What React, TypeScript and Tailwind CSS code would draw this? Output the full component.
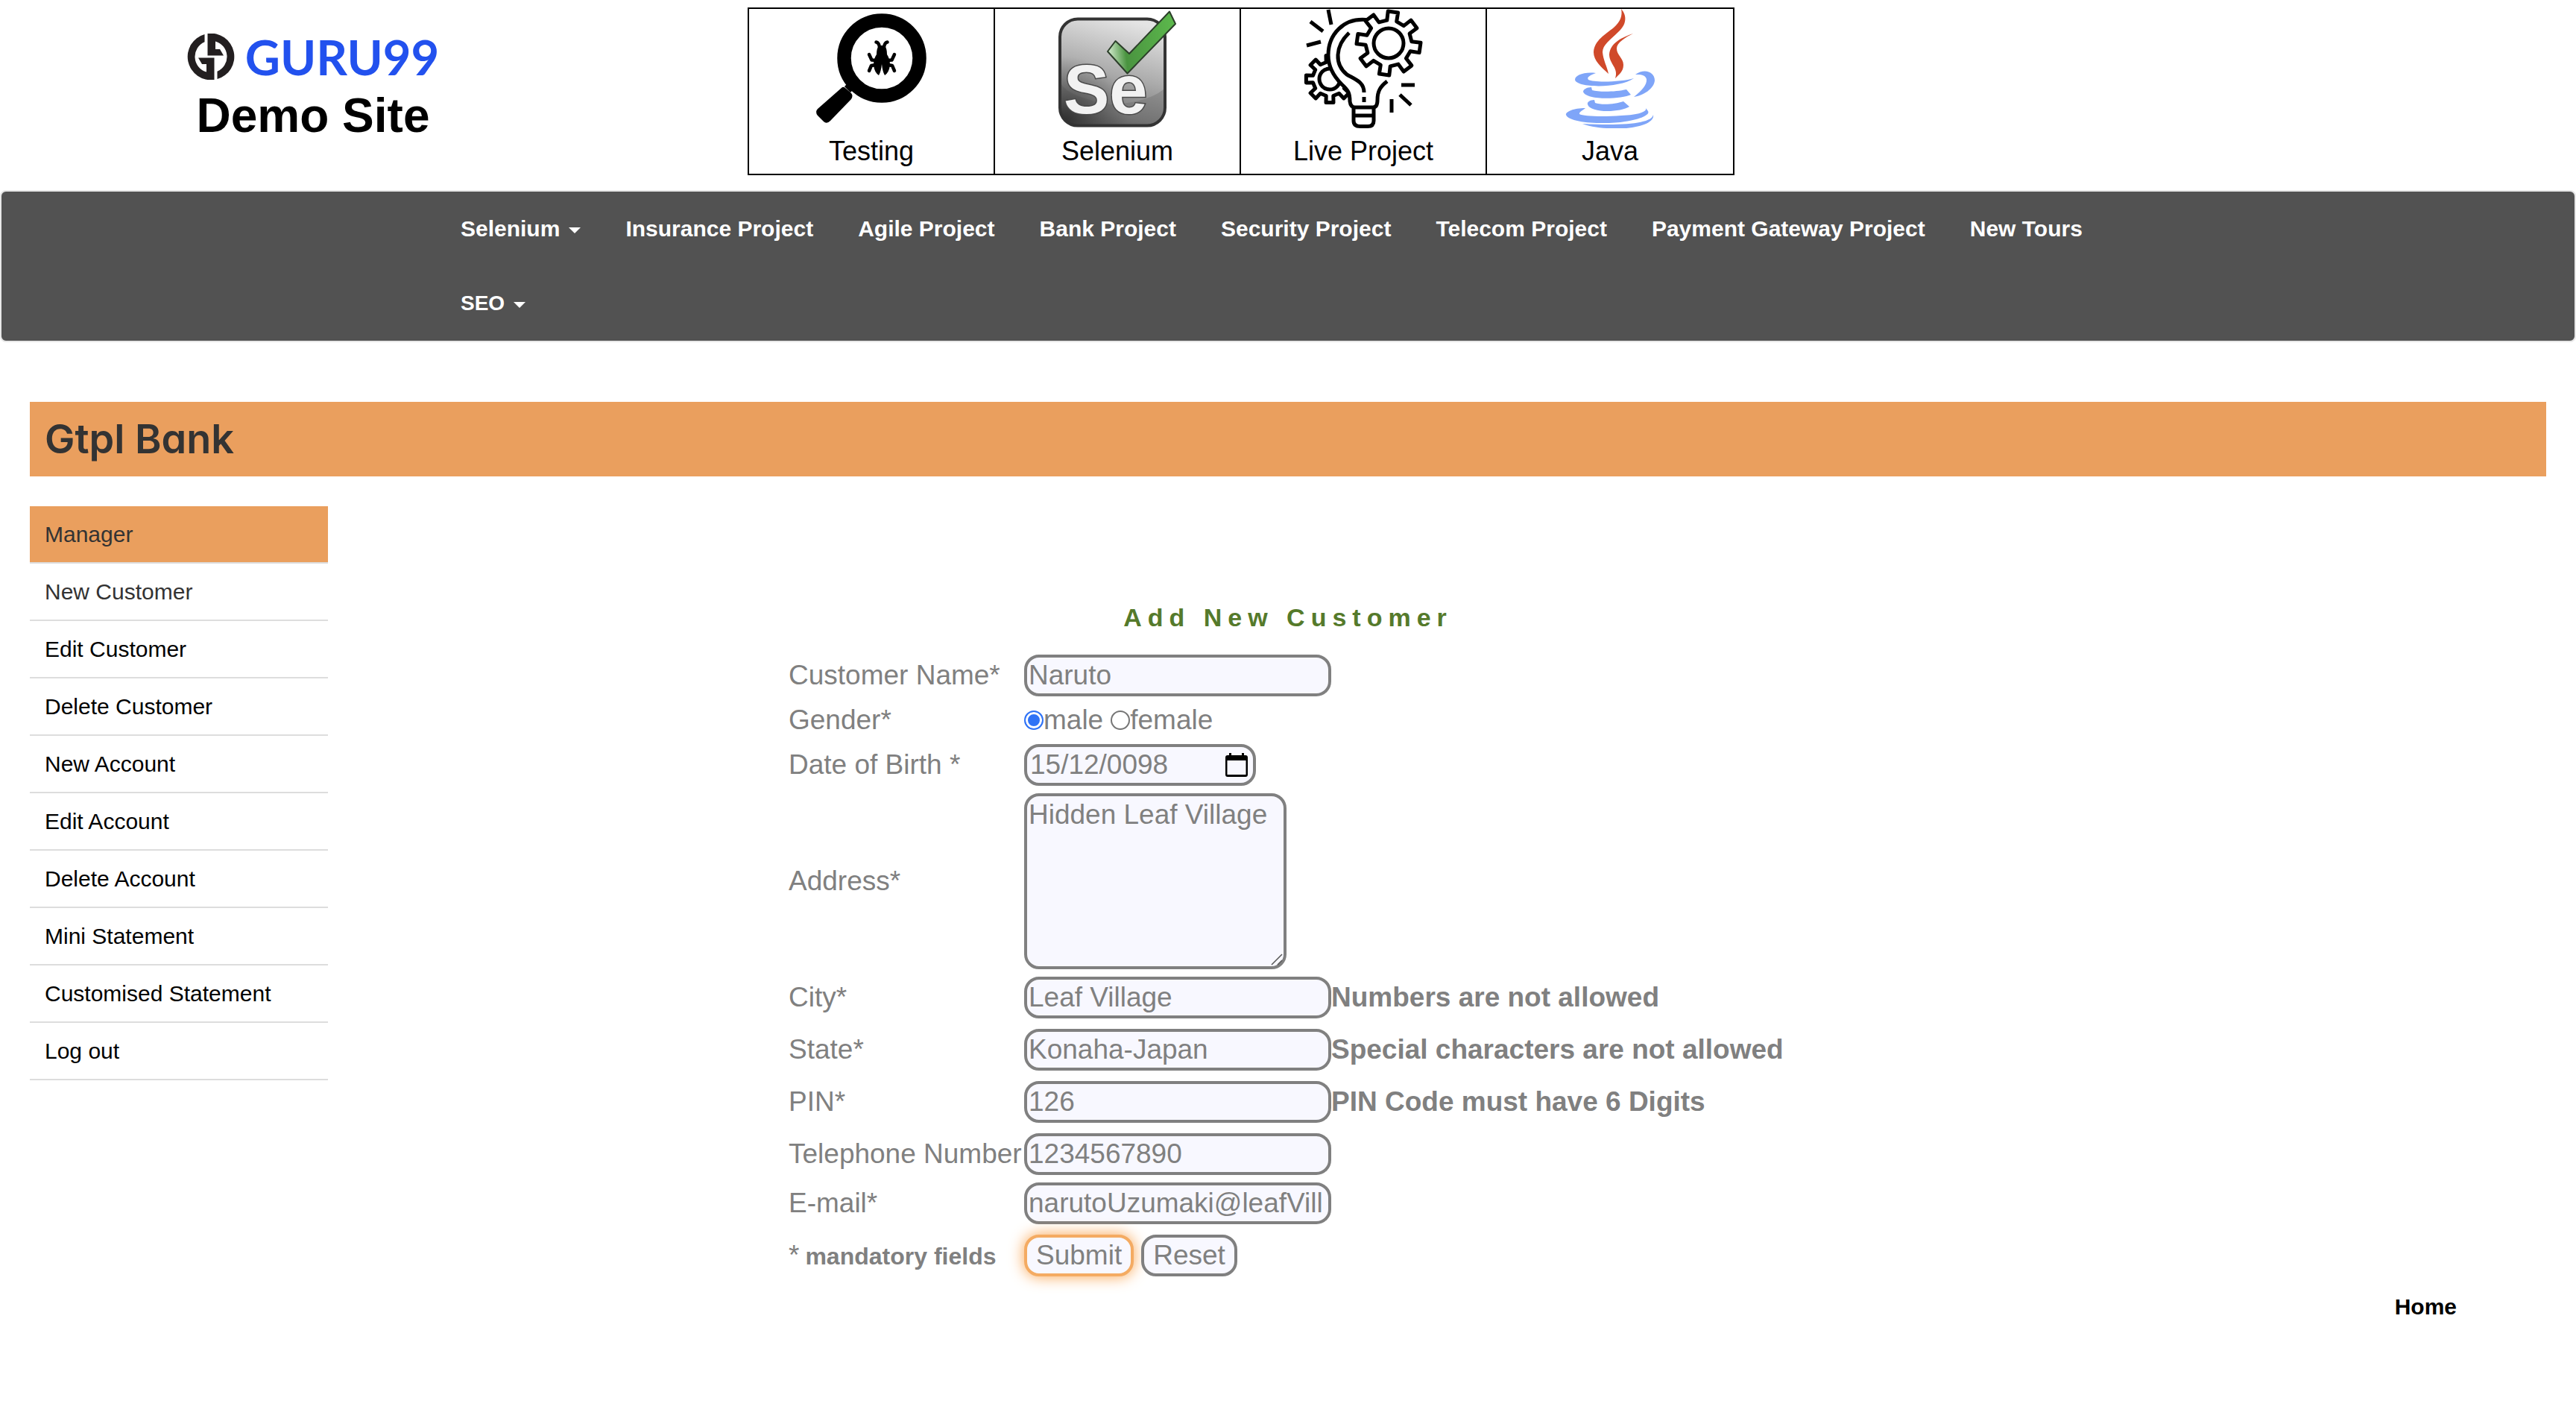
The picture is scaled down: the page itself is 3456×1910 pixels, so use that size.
import { useState } from "react";
import type { ReactNode } from "react";

/* ---------- Drawings ---------- */

function gearPath(cx: number, cy: number, outer: number, root: number, teeth: number, turn: number) {
  const step = 360 / teeth;
  const at = (r: number, deg: number) => {
    const a = ((deg - 90) * Math.PI) / 180;
    return `${(cx + r * Math.cos(a)).toFixed(1)} ${(cy + r * Math.sin(a)).toFixed(1)}`;
  };
  const points: string[] = [];
  for (let i = 0; i < teeth; i++) {
    const mid = turn + i * step;
    points.push(at(root, mid - step * 0.27), at(outer, mid - step * 0.2));
    points.push(at(outer, mid + step * 0.2), at(root, mid + step * 0.27));
  }
  return `M${points.join("L")}Z`;
}

function GuruMark() {
  const half =
    "M23.500 0.900 A31.300 31.300 0 0 0 36.500 62 L36.500 32.500 L15 32.500 L20 41 L26 41 L26 51.600 A21.500 21.500 0 0 1 23.500 11.200 Z";
  return (
    <svg viewBox="0 0 64 62" className="h-[62px] w-16" fill="#231f20" aria-hidden="true">
      <path d={half} />
      <path d={half} transform="rotate(180 32 31)" />
    </svg>
  );
}

function TestingIcon() {
  return (
    <svg viewBox="0 0 160 160" className="size-40" aria-hidden="true">
      <circle cx="94" cy="66" r="50.5" fill="none" stroke="#000" strokeWidth="18.5" />
      <path d="M46 102 L54 110" stroke="#000" strokeWidth="6" />
      <path d="M41 105 Q43 104 45 106 L53 113 Q56 116 53 121 L25 150 Q20 155 16 151 L8 143 Q4 138 8 134 Z" />
      <path d="M90 49 H98 Q101 53 101 61 Q105 67 105 75 Q104 85 98 89 Q95 84 94 74 Q93 84 90 89 Q84 85 83 75 Q83 67 87 61 Q87 53 90 49 Z" />
      <path
        d="M86.500 44.500 Q90 45 91 51 M101.500 44.500 Q98 45 97 51 M77 61 L80.500 68.500 L87 69 M111 61 L107.500 68.500 L101 69 M77 83 L80 76 L86 75 M111 83 L108 76 L102 75"
        fill="none"
        stroke="#000"
        strokeWidth="4.5"
        strokeLinecap="round"
        strokeLinejoin="round"
      />
    </svg>
  );
}

function SeleniumIcon() {
  return (
    <svg viewBox="0 0 160 160" className="size-40" aria-hidden="true">
      <defs>
        <linearGradient id="seBody" x1="0.6" y1="0" x2="0.35" y2="1">
          <stop offset="0" stopColor="#e4e4e4" />
          <stop offset="0.5" stopColor="#ababab" />
          <stop offset="0.85" stopColor="#7a7a7a" />
          <stop offset="1" stopColor="#565656" />
        </linearGradient>
        <radialGradient id="seShade" cx="0.05" cy="0.95" r="0.6">
          <stop offset="0" stopColor="#222" stopOpacity="0.75" />
          <stop offset="1" stopColor="#444" stopOpacity="0" />
        </radialGradient>
        <linearGradient id="seCheck" x1="0" y1="0.5" x2="1" y2="0.4">
          <stop offset="0" stopColor="#cfe8ca" />
          <stop offset="0.25" stopColor="#4a9440" />
          <stop offset="1" stopColor="#5cb84c" />
        </linearGradient>
      </defs>
      <rect x="3" y="13.5" width="141" height="143" rx="24" fill="url(#seBody)" />
      <path d="M4 100 Q14 118 70 128 Q120 126 142 108 V134 Q142 155 120 155 H27 Q4 155 4 134 Z" fill="#666" opacity="0.35" />
      <rect x="3" y="13.5" width="141" height="143" rx="24" fill="url(#seShade)" stroke="#333" strokeWidth="4" />
      <text
        x="8"
        y="140"
        fontSize="92"
        fontWeight="700"
        fontFamily="Liberation Sans, sans-serif"
        fill="#f2f2f2"
        stroke="#4a4a4a"
        strokeWidth="3"
        paintOrder="stroke"
      >
        Se
      </text>
      <path
        d="M67 57 L77.500 43 L96 60 L150 3.500 L158 20 L93.500 86.500 Z"
        fill="url(#seCheck)"
        stroke="#2c3f2a"
        strokeWidth="2"
        strokeLinejoin="round"
      />
    </svg>
  );
}

function LiveProjectIcon() {
  return (
    <svg
      viewBox="0 0 160 160"
      className="size-40"
      fill="none"
      stroke="#000"
      strokeWidth="5"
      strokeLinejoin="round"
      aria-hidden="true"
    >
      <path d={gearPath(35, 94, 32, 23, 8, 0)} />
      <circle cx="35" cy="94" r="14" />
      <path
        d="M84 14 C52 12 33 36 33 62 C33 80 42 92 51 101 C60 109 62 113 62 124 Q63 132 69 132 H93 Q99 132 99 122 C99 110 103 104 112 97 L100 60 Z"
        fill="#fff"
        stroke="none"
      />
      <path d="M88 15 C52 10 33 36 33 62 C33 80 42 92 51 101 C60 109 62 113 62 124 Q63 132 69 132 H93 Q99 132 99 122 C99 110 103 104 112 97" />
      <path d="M61 32 C42 50 41 74 58 88 C70 95 81 98 81 112" />
      <path d="M81 118 V125" />
      <path d="M67 132 V150 Q67 157.500 76 157.500 H86 Q94 157.500 94 150 V132 M67 143 H94" />
      <path d={gearPath(114, 46, 43, 31, 8, 8)} fill="#fff" />
      <circle cx="114" cy="46" r="20" />
      <path d="M33 1 L37 21 M9 17 L26 30 M4 49 L23 44 M131 102 H149 M129 115 L144 129 M118 121 V139" />
    </svg>
  );
}

function JavaIcon() {
  return (
    <svg viewBox="0 0 160 160" className="size-40" aria-hidden="true">
      <g fill="#d0492a">
        <path d="M95 0 C104 10 101 22 92 30 C80 42 70 48 70 58 C71 69 76 77 78 87 C68 78 58 69 58 58 C59 42 74 34 85 25 C94 17 97 9 95 0 Z" />
        <path d="M111 33 C101 38 89 45 89 53 C89 62 98 66 98 75 C98 84 92 88 87 93 C92 79 79 74 79 61 C80 46 96 38 111 33 Z" />
      </g>
      <g fill="#7fa5f8">
        <path d="M61 86 C45 84 33 89 33 95 C35 106 92 107 112 93 C96 98 58 99 51 95 C48 91 54 89 61 86 Z" />
        <path d="M114 88 C126 79 140 84 140 96 C139 107 125 116 112 118 C122 110 130 102 129 94 C127 88 121 88 114 88 Z" />
        <path d="M55 105 C49 105 44 108 44 111 C48 123 95 121 108 115 L102 108 C89 111 66 112 56 109 Z" />
        <path d="M59 122 C53 122 49 125 50 128 C53 140 94 139 106 131 L98 124 C87 128 68 129 60 126 Z" />
        <path d="M47 133 C31 133 20 138 21 142 C25 154 78 155 100 151 C121 148 134 142 131 137 L128 133 C130 138 118 142 95 143 C70 145 44 144 39 141 C38 138 44 136 47 133 Z" />
        <path d="M138 142 C136 153 102 157 43 154 C54 158 68 160 80 160 H102 C124 158 140 151 138 142 Z" />
      </g>
    </svg>
  );
}

function CalendarIcon() {
  return (
    <svg viewBox="0 0 30 32" className="h-8 w-[30px]" aria-hidden="true">
      <path d="M5 0 H8 V3 H22 V0 H25 V3 H27 Q30 3 30 6 V29 Q30 32 27 32 H3 Q0 32 0 29 V6 Q0 3 3 3 H5 Z M2.500 10 V29 H27.500 V10 Z" fill="#000" fillRule="evenodd" />
    </svg>
  );
}

/* ---------- Data ---------- */

const tools: { name: string; icon: ReactNode }[] = [
  { name: "Testing", icon: <TestingIcon /> },
  { name: "Selenium", icon: <SeleniumIcon /> },
  { name: "Live Project", icon: <LiveProjectIcon /> },
  { name: "Java", icon: <JavaIcon /> },
];

const navItems = [
  { name: "Selenium", menu: true },
  { name: "Insurance Project" },
  { name: "Agile Project" },
  { name: "Bank Project" },
  { name: "Security Project" },
  { name: "Telecom Project" },
  { name: "Payment Gateway Project" },
  { name: "New Tours" },
  { name: "SEO", menu: true, small: true },
];

const sideItems = [
  "Manager",
  "New Customer",
  "Edit Customer",
  "Delete Customer",
  "New Account",
  "Edit Account",
  "Delete Account",
  "Mini Statement",
  "Customised Statement",
  "Log out",
];

const lowerFields = [
  { id: "city", label: "City*", value: "Leaf Village", error: "Numbers are not allowed" },
  { id: "state", label: "State*", value: "Konaha-Japan", error: "Special characters are not allowed" },
  { id: "pin", label: "PIN*", value: "126", error: "PIN Code must have 6 Digits" },
  { id: "tel", label: "Telephone Number", value: "1234567890" },
];

/* ---------- Form parts ---------- */

const box = "rounded-[20px] border-4 border-[#808080] bg-[#f8f8ff] text-[#808080] outline-none";

function Row({ label, htmlFor, className, children }: { label: ReactNode; htmlFor?: string; className: string; children: ReactNode }) {
  return (
    <div className={`flex items-center ${className}`}>
      <label htmlFor={htmlFor} className="w-[316px] shrink-0 whitespace-nowrap">
        {label}
      </label>
      {children}
    </div>
  );
}

function TextField({ id, value }: { id: string; value: string }) {
  return <input id={id} name={id} type="text" defaultValue={value} className={`${box} h-14 w-[412px] pr-[6px] pl-[2px]`} />;
}

const radio =
  "size-[26px] shrink-0 appearance-none rounded-full border-2 border-[#767676] bg-white checked:border-[#2f73f6] checked:bg-[#2f73f6] checked:shadow-[inset_0_0_0_3px_white]";

function CustomerForm() {
  const [gender, setGender] = useState("male");
  return (
    <form className="mx-auto w-[1340px] text-[37px] leading-[42px] text-[#808080]" onSubmit={(e) => e.preventDefault()}>
      <h2 className="mt-[129px] mb-[30px] text-center text-[34px] leading-10 font-bold tracking-[8px] text-[#557a2b]">
        Add New Customer
      </h2>
      <Row label="Customer Name*" htmlFor="name" className="h-14">
        <TextField id="name" value="Naruto" />
      </Row>
      <div role="radiogroup" aria-label="Gender" className="flex h-16 items-center">
        <span className="w-[316px] shrink-0">Gender*</span>
        {["male", "female"].map((g) => (
          <label key={g} className="mr-[10px] flex items-center">
            <input type="radio" name="gender" value={g} checked={gender === g} onChange={() => setGender(g)} className={radio} />
            {g}
          </label>
        ))}
      </div>
      <Row label="Date of Birth *" htmlFor="dob" className="h-14">
        <div className={`${box} flex h-14 w-[311px] items-center pr-[7px] pl-1`}>
          <input id="dob" name="dob" type="text" defaultValue="15/12/0098" className="w-full min-w-0 outline-none" />
          <button type="button" aria-label="Open calendar" className="shrink-0">
            <CalendarIcon />
          </button>
        </div>
      </Row>
      <Row label="Address*" htmlFor="address" className="mt-[10px] mb-[3px]">
        <div className="relative">
          <textarea
            id="address"
            name="address"
            defaultValue="Hidden Leaf Village"
            className={`${box} block h-[236px] w-[352px] resize-none overflow-hidden px-[2px] py-1`}
          />
          <svg viewBox="0 0 18 18" className="pointer-events-none absolute right-1 bottom-1 size-[18px]" stroke="#555" strokeWidth="1.5" aria-hidden="true">
            <path d="M2 16 L16 2 M10 16 L16 10" />
          </svg>
        </div>
      </Row>
      {lowerFields.map((f) => (
        <Row key={f.id} label={f.label} htmlFor={f.id} className="h-[70px]">
          <TextField id={f.id} value={f.value} />
          {f.error && <span className="font-bold whitespace-nowrap">{f.error}</span>}
        </Row>
      ))}
      <Row label="E-mail*" htmlFor="email" className="h-[62px]">
        <TextField id="email" value="narutoUzumaki@leafVillage.com" />
      </Row>
      <div className="mt-1 flex h-[70px] items-center">
        <p className="w-[316px] shrink-0">
          *<strong className="ml-2 text-[32px]">mandatory fields</strong>
        </p>
        <button
          type="submit"
          className="h-14 rounded-[20px] border-4 border-[#f4ab62] bg-[#f8f8ff] px-3 shadow-[0_0_20px_#f9a24c]"
        >
          Submit
        </button>
        <button type="reset" className="ml-[10px] h-14 rounded-[20px] border-4 border-[#808080] bg-[#f8f8ff] px-3">
          Reset
        </button>
      </div>
    </form>
  );
}

/* ---------- Page ---------- */

export default function App() {
  return (
    <div className="min-h-screen bg-white font-['Liberation_Sans',Arial,sans-serif] text-[30px] leading-10 text-black">
      <header className="flex items-start pb-5">
        <div className="flex w-[840px] flex-col items-center pt-9">
          <a href="#" className="flex h-20 items-center gap-[14px]">
            <GuruMark />
            <span className="font-['Lato',sans-serif] text-[65px] leading-none font-bold text-[#2251ee]">GURU99</span>
          </a>
          <h2 className="mt-1 text-[64px] leading-[70px] font-bold">Demo Site</h2>
        </div>
        <ul className="mt-[10px] ml-[163px] grid w-[1324px] grid-cols-4 divide-x-2 divide-black border-2 border-black">
          {tools.map((t) => (
            <li key={t.name}>
              <a href="#" className="flex flex-col items-center text-[36px] leading-[61px]">
                {t.icon}
                {t.name}
              </a>
            </li>
          ))}
        </ul>
      </header>

      <nav className="rounded-lg border-2 border-[#e7e7e7] bg-[#525252]">
        <ul className="mx-auto flex max-w-[2280px] flex-wrap">
          {navItems.map((item) => (
            <li key={item.name}>
              <a
                href="#"
                className={`flex items-center p-[30px] leading-10 font-bold text-white ${item.small ? "text-[28px]" : "text-[30px]"}`}
              >
                {item.name}
                {item.menu && (
                  <span className="mt-1 ml-3 border-x-8 border-t-8 border-x-transparent border-t-white" />
                )}
              </a>
            </li>
          ))}
        </ul>
      </nav>

      <div className="px-10 pt-20">
        <h1 className="bg-[#ea9f5e] pl-5 font-['Inter',sans-serif] text-[54px] leading-[100px] font-semibold text-[#333] [font-feature-settings:'cv11']">
          Gtpl Bank
        </h1>
        <div className="mt-10 grid grid-cols-[400px_1fr_400px]">
          <ul>
            {sideItems.map((name, i) => (
              <li key={name} className="border-b-2 border-[#ddd]">
                <a
                  href="#"
                  className={`block pl-5 leading-[75px] ${i === 0 ? "bg-[#ea9f5e]" : ""} ${i < 2 ? "text-[#333]" : "text-black"}`}
                >
                  {name}
                </a>
              </li>
            ))}
          </ul>
          <CustomerForm />
        </div>
        <div className="mt-[14px] flex justify-end pr-[120px]">
          <a href="#" className="font-bold">
            Home
          </a>
        </div>
      </div>
    </div>
  );
}
